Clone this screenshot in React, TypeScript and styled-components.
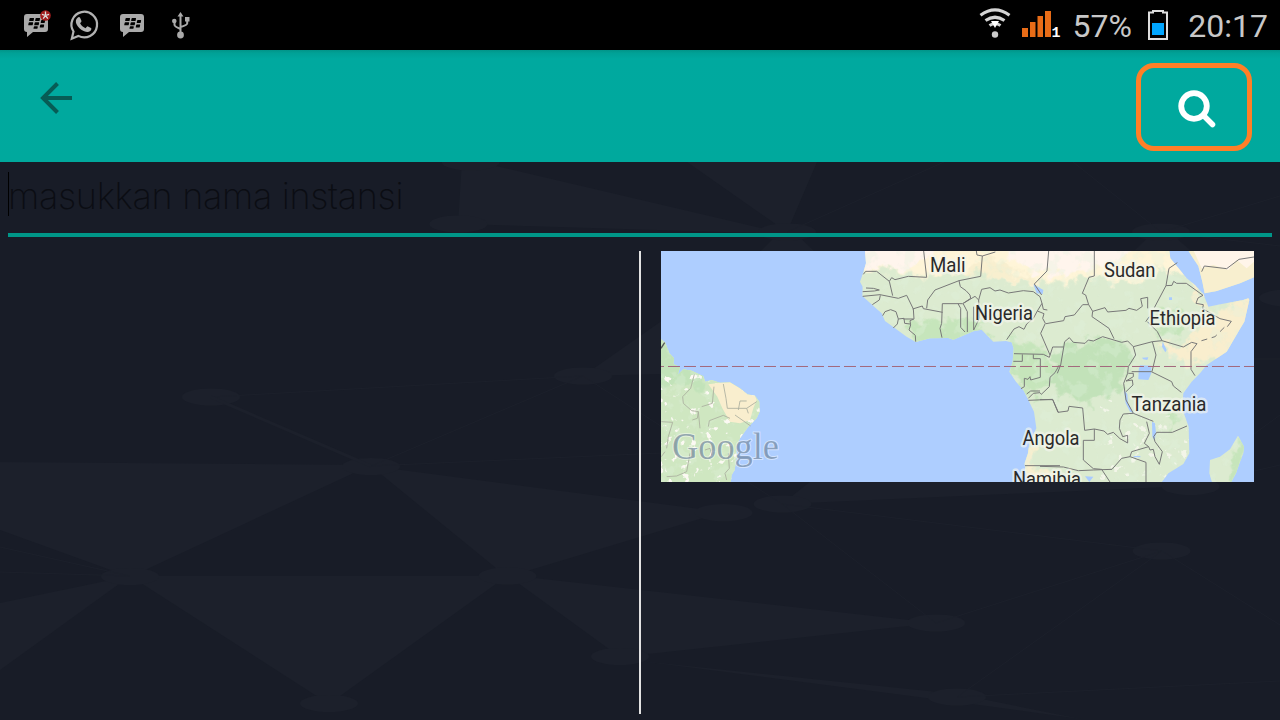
import React from 'react';
import styled, { createGlobalStyle } from 'styled-components';

const Global = createGlobalStyle`
  * { box-sizing: border-box; }
  body { margin: 0; background: #181c27; overflow: hidden; }
`;

const Screen = styled.div`
  width: 1280px; height: 720px; display: flex; flex-direction: column;
  font-family: Roboto, "Liberation Sans", sans-serif; overflow: hidden;
`;
const StatusBar = styled.header`
  height: 50px; background: #000; display: flex; justify-content: space-between; align-items: flex-start;
`;
const StatusText = styled.span<{ $width: number }>`
  width: ${p => p.$width}px; color: #c8c8c8; font-size: 32px; font-weight: 400; line-height: 53px; white-space: nowrap; text-align: right;
`;
const StatusGroup = styled.div<{ $end?: number }>`
  display: flex; height: 50px; padding-right: ${p => p.$end ?? 0}px;
  svg { display: block; flex: none; }
`;
const BatterySlot = styled.div`
  margin: 0 0 0 16px; width: 20px;
`;
const AppBar = styled.div`
  height: 112px; flex: none; display: flex; justify-content: space-between; align-items: flex-start;
  padding: 13px 28px 0 36px;
  background: linear-gradient(#019488 0, #00a196 3px, #00a99f 9px, #00a99d 100%);
`;
const BackButton = styled.button`
  border: 0; padding: 0; margin-top: 15px; width: 40px; height: 40px; background: none;
  svg { display: block; }
`;
const SearchButton = styled.button`
  width: 116px; height: 88px; padding: 4px 0 0 6px; border: 5px solid #ff7f27; border-radius: 18px; background: none;
  display: flex; align-items: center; justify-content: center;
`;
const Body = styled.main`
  height: 558px; position: relative; padding: 0 8px; display: flex; flex-direction: column;
`;
const Backdrop = styled.svg`
  position: absolute; inset: 0; z-index: -1; background: #181c27;
`;
const Field = styled.div`
  height: 75px; flex: none; border-bottom: 4px solid #009688; padding-top: 10px; display: flex;
`;
const Caret = styled.i`
  width: 1px; height: 44px; background: #000;
`;
const Hint = styled.span`
  margin-left: -1px; color: #0b0d13; font-family: Inter, "Liberation Sans", sans-serif; font-weight: 200; font-size: 36px;
  letter-spacing: -.33px; line-height: 49px; white-space: nowrap;
`;
const Columns = styled.div`
  display: flex; margin-top: 14px; height: 463px;
`;
const Results = styled.div`
  width: 633px; border-right: 2px solid #e2e2e2;
`;
const MapCard = styled.div`
  margin-left: 20px; width: 593px; height: 231px; overflow: hidden;
  svg { display: block; }
`;

const nodes = [[211,397],[371,466.5],[130,576.5],[507.5,576],[329,703.5],[620,656.5],[583,376],[723.5,512.7],[782.5,504],[1190.6,486.5],[1161.6,551],[936,623],[957,697],[470.7,162],[458.4,224],[787,232],[1161,232],[1288,298]];
const facets = [
  '0,462 371,465 130,577 0,530', '371,466 723,512 507,577', '130,576 507,576 329,704', '130,576 0,603 0,670',
  '507,575 936,623 620,657', '782,504 1190,486 1000,440 850,450', '640,661 957,694 1081,719 957,702',
  '462,160 470,160 787,234 458,224', '687,162 817,162 787,232', '787,225 762,250 700,294 583,376 661,374 880,330 813,250', '1161,225 1135,250 1190,250',
];
const links = [[0,547,130,576],[0,572,130,576],[211,397,583,376],[371,466,583,376],[371,466,661,453],[583,376,782,504],[782,504,1162,551],[782,504,936,623],[936,623,1162,551],[1162,551,957,697],[1162,551,1280,625],[957,697,1280,681],[944,162,787,232],[1073,162,1161,232],[1161,232,1280,196],[1161,232,1280,246],[1254,434,1280,415],[1254,471,1280,465],[1254,359,1280,359]];

const Pattern = () => (
  <Backdrop width="1280" height="558" viewBox="0 162 1280 558" fill="#1c202b" stroke="none">
    {facets.map(p => <polygon key={p} points={p} />)}
    {nodes.map(([x, y]) => <ellipse key={x} cx={x} cy={y} rx="29" ry="8.6" />)}
    <g stroke="#1c202b">{links.map(([a, b, c, d]) => <line key={`${a}-${b}-${c}-${d}`} x1={a} y1={b} x2={c} y2={d} />)}</g>
    <path d="M211 397 371 466" stroke="#1c202b" strokeWidth="3" />
  </Backdrop>
);

const Chat = ({ x }: { x: number }) => (
  <g transform={`translate(${x} 0)`}>
    <path d="M3 14h18q3 0 3 3v12q0 3-3 3H9l-6 5v-5q-3 0-3-3V17q0-3 3-3z" fill="#aaa" />
    <g fill="#000" transform="skewX(-12) translate(4.500 0)">
      <rect x="5" y="18" width="4.500" height="3" rx=".6" /><rect x="11" y="18" width="4.500" height="3" rx=".6" />
      <rect x="5" y="22.300" width="4.500" height="3" rx=".6" /><rect x="11" y="22.300" width="4.500" height="3" rx=".6" /><rect x="17" y="20" width="4" height="3" rx=".6" />
      <rect x="11" y="26.300" width="4" height="2.500" rx=".6" /><rect x="17" y="24.500" width="4" height="3" rx=".6" />
    </g>
  </g>
);

const Notifications = () => (
  <svg width="200" height="50" viewBox="0 0 200 50">
    <Chat x={24} />
    <circle cx="45.500" cy="15.500" r="5.300" fill="#a01c1c" />
    <path d="M45.500 11.500v4M41.900 14.300l3.600 1.200M49.100 14.300l-3.600 1.200M43.200 18.700l2.300-3.200M47.800 18.700l-2.300-3.200" stroke="#ddd" strokeWidth="1.300" />
    <path d="M71.800 38.700 73.500 31.500A12.800 12.800 0 1 1 78.300 35.900Z" fill="none" stroke="#b2b2b2" strokeWidth="2.200" />
    <path d="M78.300 18.500c1-1 2-.8 2.500.1l1.300 2.900c.3.800-.4 1.500-1.300 2.600 1.300 2.500 3 3.900 5.500 5 .8-.8 1.500-2.200 2.400-1.900l3 1.500c.8.500.2 2.200-.5 2.900-1.800 1.600-4 1.400-6.300.5-3.700-1.500-6.300-4.300-7.800-7.400-1-2.300-.7-4.600 1.200-6.200z" fill="#b2b2b2" transform="translate(-.7 -.8)" />
    <Chat x={120} />
    <g stroke="#aaa" strokeWidth="2" fill="none"><path d="M180.500 15v19M174.500 22v3q0 1.500 6 4M187.200 20v3.500q0 1.500-6.500 3.500" /></g>
    <path d="M180.500 12l3 4.500h-6zM185 17h4.500v4.500H185z" fill="#aaa" /><circle cx="174.300" cy="21" r="2.300" fill="#aaa" /><circle cx="180.500" cy="35" r="3.400" fill="#aaa" />
  </svg>
);

const Signals = () => (
  <svg width="90" height="50" viewBox="975 0 90 50">
    <g fill="none" stroke="#d4d4d4" strokeWidth="3.200"><path d="M980.500 15.200q14.500-10.500 29 0M985.500 20.500q9.500-6.500 19 0M989.500 25.500q5.500-3.500 11 0" /></g>
    <path d="M991 21h8l-4 7z" fill="#fff" /><circle cx="995" cy="34.500" r="3.200" fill="#ccc" />
    <g fill="#e86c17"><rect x="1022" y="28" width="6" height="9" /><rect x="1030" y="22" width="5.500" height="15" /><rect x="1037.500" y="16" width="5.500" height="21" /><rect x="1045" y="11" width="6" height="26" /></g>
    <text x="1051.500" y="37" fontSize="15" fontWeight="700" fill="#fff" fontFamily="Liberation Mono, monospace">1</text>
  </svg>
);

const Battery = () => (
  <svg width="20" height="50" viewBox="1148 0 20 50">
    <path d="M1149 12.500h4v-1.500h10v1.500h4V39h-18z" fill="none" stroke="#ddd" strokeWidth="2" />
    <rect x="1152" y="23" width="12" height="12" fill="#00a5ff" />
  </svg>
);

type Label = { t: string; x: number; y: number; w: number };
const labels: Label[] = [
  { t: 'Mali', x: 930, y: 272, w: 35.5 }, { t: 'Sudan', x: 1104, y: 277, w: 51.5 }, { t: 'Nigeria', x: 975, y: 320, w: 58 },
  { t: 'Ethiopia', x: 1149.5, y: 325, w: 66 }, { t: 'Tanzania', x: 1131.5, y: 411, w: 75 }, { t: 'Angola', x: 1022.5, y: 445, w: 57 }, { t: 'Namibia', x: 1013, y: 485.5, w: 68 },
];

const WorldMap = () => (
  <svg width="593" height="231" viewBox="661 251 593 231">
    <defs>
      <filter id="rough" x="0" y="0" width="1" height="1"><feTurbulence type="fractalNoise" baseFrequency=".025" numOctaves="4" seed="4" /><feColorMatrix values="0 0 0 0 .75  0 0 0 0 .88  0 0 0 0 .72  8 0 0 0 -4.300" /></filter>
      <filter id="specks" x="0" y="0" width="1" height="1"><feTurbulence type="fractalNoise" baseFrequency=".04" numOctaves="3" seed="9" /><feColorMatrix values="0 0 0 0 .97  0 0 0 0 .95  0 0 0 0 .9  12 0 0 0 -7.700" /></filter>
      <filter id="soft"><feGaussianBlur stdDeviation="4" result="b" /><feTurbulence type="fractalNoise" baseFrequency=".03" numOctaves="3" seed="2" result="n" /><feDisplacementMap in="b" in2="n" scale="70" xChannelSelector="R" yChannelSelector="G" /></filter>
      <clipPath id="land">
        <path d="M63 298 75 307 88 340 102 355 100 372 120 382 113 405 130 388 155 392 190 409 196 425 215 420 240 428 270 427 300 445 322 463 345 467 358 485 359 515 350 535 325 560 300 595 288 620 290 650 284 690 275 705 272 730H63z" />
        <path d="M675 33 678 70 669 100 660 125 668 140 667 168 697 195 725 220 735 243 765 265 800 290 827 306 870 295 925 294 940 299 1000 274 1025 269 1040 285 1060 305 1098 303 1115 307 1121 325 1118 365 1108 395 1128 425 1150 450 1165 480 1182 515 1189 565 1168 610 1164 640 1154 670 1156 695 1175 733H1560L1585 700 1630 672 1648 640 1646 560 1626 505 1630 460 1655 425 1680 400 1700 375 1760 335 1798 270 1813 245 1828 180 1825 175 1810 180 1745 192 1705 200 1690 162 1665 135 1640 115 1620 90 1591 55 1588 33z" />
        <path d="M1645 33 1675 78 1687 125 1694 160 1730 153 1800 130 1842 112V33z" />
        <path d="M1794 587 1812 620 1810 640 1800 665 1788 700 1770 733H1718L1708 700 1710 660 1740 650 1770 628z" />
      </clipPath>
    </defs>
    <rect x="661" y="251" width="593" height="231" fill="#aeceff" />
    <g transform="translate(640 240) scale(.333333)">
      <g clipPath="url(#land)">
        <rect width="1860" height="750" fill="#dcebd0" />
        <rect x="60" y="290" width="305" height="445" fill="#cfe7c1" />
        <g filter="url(#soft)">
          <path d="M40 275 195 400 190 450 100 430 40 470z" fill="#c2e3b9" />
          <path d="M635 0H1600L1640 120 1560 75 1500 125 1370 120 1330 120 1180 130 1100 125 1040 95 850 110 760 90 635 95z" fill="#fff5d8" />
          <path d="M1010 60 1080 70 1140 110 1190 100 1180 125 1090 120 1040 95 980 110z" fill="#f8efcf" />
          <path d="M650 0H920L880 55 790 90 650 80zM1090 0H1500L1440 75 1340 80 1230 110 1130 70z" fill="#fff5ed" />
          <path d="M1270 320 1400 295 1470 315 1475 370 1440 450 1350 490 1250 460 1220 400z" fill="#c2e2b9" />
          <path d="M1100 300 1220 330 1230 430 1180 480 1110 400zM790 250 1000 235 1050 300 830 320z" fill="#c6e5bb" />
          <path d="M1545 300 1630 320 1690 240 1860 150 1850 280 1780 350 1650 370 1590 350zM1630 90 1700 190 1720 220 1660 170z" fill="#f9eece" />
          <path d="M1150 600 1185 610 1170 680 1250 700 1250 755H1140z" fill="#f8efcf" />
          <path d="M1560 200 1640 220 1630 280 1560 290zM1570 490 1620 520 1590 570zM1790 580 1830 600 1800 745H1780z" fill="#c6e5bb" />
        </g>
        <g transform="translate(60 30)"><rect width="1790" height="710" filter="url(#rough)" opacity=".3" /></g>
        <rect x="60" y="380" width="310" height="360" filter="url(#specks)" /><rect x="1380" y="480" width="280" height="250" filter="url(#specks)" opacity=".7" />
        <path d="M205 433 240 428 270 427 300 445 322 463 345 467 350 480 340 505 330 540 300 550 270 545 247 505 232 470z" fill="#f9eece" />
        <path d="M1645 30H1850V120L1730 170H1690L1670 80z" fill="#f8efcf" /><path d="M1660 30H1850V58L1820 85 1790 60 1765 90 1720 75 1685 85z" fill="#fff5e9" />
      </g>
      <g fill="#a9cbff"><path d="M1180 133 1210 150 1208 162 1190 160zM1496 390 1500 376 1534 377 1534 400 1525 420 1495 418zM1568 305 1580 330 1576 337 1566 320zM1452 450 1462 462 1464 490 1480 518 1470 515 1457 490zM1536 545 1545 550 1548 580 1543 602 1537 590zM1506 353 1525 352 1522 360 1510 358zM1587 172h9v8h-9zM1335 709 1360 710 1348 726zM1481 648h20v4h-20z" /></g>
      <g fill="none" stroke="#777" strokeWidth="3" strokeLinejoin="round">
        <path d="M63 325 74 308" stroke="#555" strokeWidth="4" />
        <g transform="translate(600 0)">
          <path d="M70 103 77 94H110L148 124 158 167M148 124 155 113 165 119 205 109 260 112 251 33M68 155 103 153 118 150 100 145 78 144M68 169 120 164 175 175 200 166 220 207 222 237 210 242 212 255 207 270 226 286 227 305M97 194 118 180 121 166M128 227 135 215 152 209 168 215 175 237 192 235 194 250 210 252M175 237 172 252 160 264M190 237H220M218 207 247 198 250 206 308 217M260 205 263 180 285 150 357 122 422 109 427 48 466 36M409 33 411 45 427 48M357 122 361 140 378 152 390 165 392 175 368 191 307 191 305 250 300 265 306 293M354 191 362 205V262L375 276M370 192 382 215V276M370 190 405 169 416 180 418 235 401 270V200M416 180 425 148 450 143 465 153 480 150 505 159 550 152 580 155 600 170 606 190 592 213 612 221 608 235 616 250 602 280 630 345M500 299 522 267 537 260 552 268 560 252 580 235 592 213M626 33 621 93 583 132 605 165M606 190 610 208 622 210M522 341 610 343 628 352 638 321H672M520 364H547V343M580 343V356H601V412L572 420 570 410 564 418 553 415V440L543 446M565 475 580 460 600 458 604 463 628 440 630 412 645 398 658 375M560 462 572 453 600 453M565 481 638 478 655 517M555 677H660" />
        </g>
        <g transform="translate(1200 0)">
          <path d="M163 33V108L147 112 127 160 137 165 146 194 158 214 156 230 207 265 222 296M146 194H128L103 225 75 230 71 242 18 251M158 214 195 203 203 216 258 211 267 205 290 211 307 199 302 176 323 172V205M343 203 378 137 387 85 412 68M378 137 396 136 401 124 410 130 439 130 489 166 474 174 468 190 490 194 488 206 540 236 574 244 562 260M485 95 493 78 560 86 597 58 642 51M317 245 328 230M322 245 352 275 366 302 430 321 455 307 471 311 453 335V388L465 407M366 302 337 305 348 345 336 395M337 305 280 320 263 303 245 307 188 290 160 303 145 300 135 310 100 307 88 293 74 305 62 375 52 400M280 320 287 345 265 380 263 400 251 430 258 480 280 520 340 544M275 395H334L395 425 400 438 424 457M265 400 280 400V410L258 423 277 420 279 435 258 455M0 479H38L54 517 84 513 87 499 128 504 134 571 163 567 192 573 203 583 220 577 240 596 263 609V586L248 590 238 565 240 540 250 522 280 520M163 567V601H130V660L160 686 185 688 210 726M0 679 70 681 115 692 160 690 216 688 245 655 270 650 275 635 326 620 313 610 328 580 320 545M270 650 318 667V726M326 620 330 630 340 628 345 650 358 673 367 635 345 605 341 590 350 577H397L441 558" />
          <path d="M553 262 525 290 475 305" strokeDasharray="18 14" />
        </g>
        <path stroke="#aaad9d" strokeWidth="2.500" d="M163 403 152 445 128 470 130 490 155 512 175 515 172 535 157 540M185 500 217 490 222 440M175 515 180 565M250 432 258 475 262 505H320L350 485M295 510 300 483H320M320 505 325 520M285 525 332 558M205 560 208 542 250 526 270 535M64 545 98 547 85 590 80 625M64 650 75 635M150 640 140 695 110 708 80 710M195 630 210 625 215 645M265 640 268 685 255 700 260 720" />
      </g>
      <path d="M36 379.500H1850" stroke="#a3687c" strokeWidth="3" strokeDasharray="36 12" />
    </g>
    <g fontFamily="Roboto" fontSize="20" fontWeight="400" fill="#2a2a2a" stroke="#f4f6ee" strokeOpacity=".65" strokeWidth="5" strokeLinejoin="round" paintOrder="stroke">
      {labels.map(l => <text key={l.t} x={l.x} y={l.y} textLength={l.w} lengthAdjust="spacingAndGlyphs">{l.t}</text>)}
    </g>
    <text x="672" y="459" textLength="107" lengthAdjust="spacingAndGlyphs" fontFamily="Liberation Serif" fontSize="38" fill="#5c7590" fillOpacity=".6" stroke="#fff" strokeOpacity=".45" strokeWidth="2" paintOrder="stroke">Google</text>
  </svg>
);

export default function App() {
  return (
    <Screen>
      <Global />
      <StatusBar>
        <StatusGroup><Notifications /></StatusGroup>
        <StatusGroup $end={12}>
          <Signals />
          <StatusText $width={67}>57%</StatusText>
          <BatterySlot><Battery /></BatterySlot>
          <StatusText $width={100}>20:17</StatusText>
        </StatusGroup>
      </StatusBar>
      <AppBar>
        <BackButton aria-label="Back">
          <svg width="40" height="40" viewBox="36 78 40 40"><path d="M72 98H42M57.500 83.500 43 98l14.500 14.500" fill="none" stroke="#075c55" strokeWidth="4" /></svg>
        </BackButton>
        <SearchButton aria-label="Search">
          <svg width="40" height="40" viewBox="0 0 40 40" fill="none" stroke="#fff"><circle cx="17" cy="17" r="12.800" strokeWidth="5.800" /><path d="m27 27 8.500 8.500" strokeWidth="5.500" strokeLinecap="round" /></svg>
        </SearchButton>
      </AppBar>
      <Body>
        <Pattern />
        <Field><Caret /><Hint>masukkan nama instansi</Hint></Field>
        <Columns>
          <Results />
          <MapCard><WorldMap /></MapCard>
        </Columns>
      </Body>
    </Screen>
  );
}
